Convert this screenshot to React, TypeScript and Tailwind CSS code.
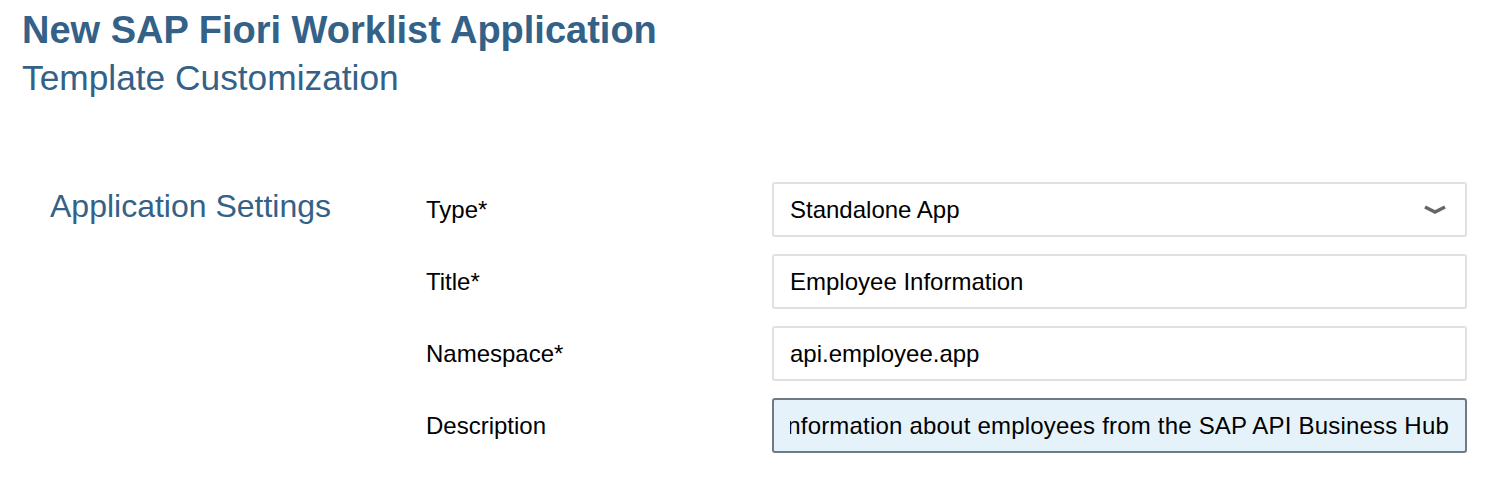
const font = { fontFamily: '"Liberation Sans", Arial, sans-serif' };

function Field({ label, children }: { label: string; children: React.ReactNode }) {
   return (
      <div className="flex items-center">
         <div className="w-[346px] text-[24px] text-black">{label}</div>
         {children}
      </div>
   );
}

export default function App() {
   const box = 'flex h-[55px] w-[695px] items-center rounded-[3px] border-2 px-[16px] text-[24px] text-black';

   return (
      <div className="min-h-[498px] bg-white pt-[8px] pl-[22px]" style={font}>
         <h1 className="text-[38px] leading-[44px] font-bold text-[#346187]">New SAP Fiori Worklist Application</h1>
         <h2 className="mt-[6px] text-[35.3px] leading-[40px] text-[#346187]">Template Customization</h2>

         <div className="mt-[84px] flex">
            <div className="w-[404px] pt-[4px] pl-[28px] text-[32px] leading-[40px] text-[#346187]">Application Settings</div>

            <div className="flex flex-col gap-[17px]">
               <Field label="Type*">
                  <div className={box + ' justify-between border-[#e0e0e0] bg-white'}>
                     <span>Standalone App</span>
                     <svg width="24" height="12" viewBox="0 0 24 12" className="mr-[2px]">
                        <path d="M2 3 L12 8 L22 3" fill="none" stroke="#666" strokeWidth="3.5" />
                     </svg>
                  </div>
               </Field>
               <Field label="Title*">
                  <div className={box + ' border-[#e0e0e0] bg-white'}>Employee Information</div>
               </Field>
               <Field label="Namespace*">
                  <div className={box + ' border-[#e0e0e0] bg-white'}>api.employee.app</div>
               </Field>
               <Field label="Description">
                  <div className={box + ' border-[#6f7a83] bg-[#e6f2fa]'}>
                     <div className="flex w-full justify-end overflow-hidden tracking-[0.2px] whitespace-nowrap">
                        Information about employees from the SAP API Business Hub
                     </div>
                  </div>
               </Field>
            </div>
         </div>
      </div>
   );
}
